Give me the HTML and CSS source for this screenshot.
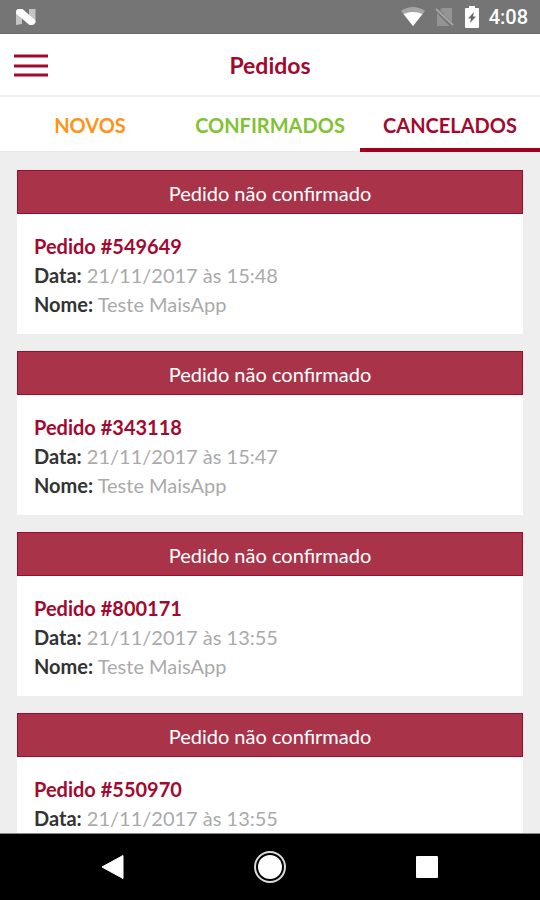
FILE: index.html
```html
<!DOCTYPE html>
<html lang="pt-BR">
<head>
<meta charset="utf-8">
<meta name="viewport" content="width=device-width, initial-scale=1">
<title>Pedidos</title>
<link rel="stylesheet" href="styles.css">
</head>
<body>
<div class="status">
  <svg class="status-logo" width="22" height="18" viewBox="0 0 22 18" aria-hidden="true">
    <path d="M1 3.500 7 6v10l-6 1zM14 1h6.500v14L14 11z" fill="#c4c4c4"/>
    <path d="M1 4Q1 1 4 1h3.500L20.500 12.500q0 4.500-4 4.500h-2L1 5.500z" fill="#fff"/>
  </svg>
  <div class="status-icons">
    <svg width="24" height="20" viewBox="0 0 24 20" aria-hidden="true">
      <path d="M0 4Q12-4 24 4L12 19z" fill="#a5a5a5"/>
      <path d="M2.500 7Q12 3 21.500 7L12 19z" fill="#fff"/>
    </svg>
    <svg width="20" height="20" viewBox="0 0 20 20" aria-hidden="true">
      <path d="M7 1h10v14.500L5 3zM2 6l12.500 13H2z" fill="#949494"/>
      <path d="M1 2l17 16" stroke="#a5a5a5" stroke-width="2"/>
    </svg>
    <svg width="14" height="22" viewBox="0 0 14 22" aria-hidden="true">
      <path d="M4 0h6v2h3q1 0 1 1v18q0 1-1 1H1q-1 0-1-1V3q0-1 1-1h3z" fill="#fff"/>
      <path d="M9 6 3 12.500h3L5 17l6-6.500H8z" fill="#666"/>
    </svg>
    <span class="clock">4:08</span>
  </div>
</div>
<header class="header">
  <button class="menu" type="button" aria-label="Menu">
    <svg width="34" height="24" viewBox="0 0 34 24" aria-hidden="true">
      <path d="M0 2h34M0 12h34M0 21h34" stroke="#a3092f" stroke-width="3"/>
    </svg>
  </button>
  <h1 class="title">Pedidos</h1>
</header>
<nav class="tabs">
  <a class="tab tab-new" href="#novos">NOVOS</a>
  <a class="tab tab-confirmed" href="#confirmados">CONFIRMADOS</a>
  <a class="tab tab-cancelled" href="#cancelados" aria-current="page">CANCELADOS</a>
</nav>
<main class="orders">
  <article class="order">
    <p class="order-state">Pedido não confirmado</p>
    <div class="order-body">
      <h2 class="order-id">Pedido #549649</h2>
      <p><b>Data:</b> 21/11/2017 às 15:48</p>
      <p><b>Nome:</b> Teste MaisApp</p>
    </div>
  </article>
  <article class="order">
    <p class="order-state">Pedido não confirmado</p>
    <div class="order-body">
      <h2 class="order-id">Pedido #343118</h2>
      <p><b>Data:</b> 21/11/2017 às 15:47</p>
      <p><b>Nome:</b> Teste MaisApp</p>
    </div>
  </article>
  <article class="order">
    <p class="order-state">Pedido não confirmado</p>
    <div class="order-body">
      <h2 class="order-id">Pedido #800171</h2>
      <p><b>Data:</b> 21/11/2017 às 13:55</p>
      <p><b>Nome:</b> Teste MaisApp</p>
    </div>
  </article>
  <article class="order">
    <p class="order-state">Pedido não confirmado</p>
    <div class="order-body">
      <h2 class="order-id">Pedido #550970</h2>
      <p><b>Data:</b> 21/11/2017 às 13:55</p>
    </div>
  </article>
</main>
<footer class="system">
  <button type="button" aria-label="Voltar">
    <svg width="34" height="34" viewBox="0 0 34 34" aria-hidden="true"><path d="M6 17 27 5.500v23z" fill="#fff" stroke="#fff" stroke-linejoin="round"/></svg>
  </button>
  <button type="button" aria-label="Início">
    <svg width="34" height="34" viewBox="0 0 34 34" aria-hidden="true"><circle cx="17" cy="17" r="15" fill="none" stroke="#ddd" stroke-width="2"/><circle cx="17" cy="17" r="12" fill="#fff"/></svg>
  </button>
  <button type="button" aria-label="Recentes">
    <svg width="34" height="34" viewBox="0 0 34 34" aria-hidden="true"><rect x="6" y="6" width="22" height="22" rx="1" fill="#fff"/></svg>
  </button>
</footer>
</body>
</html>
```
FILE: styles.css
```css
* {
  box-sizing: border-box;
}

body {
  display: flex;
  flex-direction: column;
  height: 100vh;
  margin: 0;
  overflow: hidden;
  background: #eee;
  color: #aaa;
  font: 20px/29px Lato, sans-serif;
}

h1, h2, p {
  margin: 0;
}

button {
  display: flex;
  padding: 0;
  border: 0;
  background: none;
}

.status {
  display: flex;
  flex: none;
  align-items: center;
  justify-content: space-between;
  height: 34px;
  padding: 0 12px 0 15px;
  background: #757575;
  border-bottom: 1px solid #686868;
}

.status-icons {
  display: flex;
  align-items: center;
  gap: 10px;
}

.clock {
  color: #fff;
  font: 500 20px/24px Roboto, sans-serif;
}

.header {
  display: grid;
  flex: none;
  grid-template-columns: 34px 1fr 34px;
  align-items: center;
  height: 63px;
  padding: 2px 14px 0;
  background: #fff;
  border-bottom: 2px solid #eee;
}

.title {
  color: #a3092f;
  font-size: 23px;
  line-height: 29px;
  text-align: center;
}

.tabs {
  display: grid;
  flex: none;
  grid-template-columns: repeat(3, 1fr);
  background: #fff;
}

.tab {
  height: 55px;
  border-bottom: 1px solid #e8e8e8;
  font-weight: 700;
  line-height: 56px;
  text-align: center;
  text-decoration: none;
}

.tab-new {
  color: #ff9318;
}

.tab-confirmed {
  color: #82c235;
}

.tab-cancelled {
  color: #a3092f;
  border-bottom: 4px solid #a3001f;
}

.orders {
  display: flex;
  flex: 1;
  flex-direction: column;
  gap: 17px;
  min-height: 0;
  padding: 18px 17px 0;
  overflow: hidden;
}

.order {
  flex: none;
  background: #fff;
}

.order-state {
  height: 44px;
  background: #a93449;
  border: 1px solid #a3092f;
  color: #fff;
  line-height: 44px;
  text-align: center;
}

.order-body {
  padding: 18px 17px 15px;
}

.order-id {
  color: #a3092f;
  font-size: 20px;
  line-height: 29px;
}

.order b {
  color: #333;
}

.system {
  display: grid;
  flex: none;
  grid-template-columns: repeat(3, 1fr);
  justify-items: center;
  align-items: center;
  height: 67px;
  padding: 0 34px;
  background: #000;
  border-top: 1px solid #888;
}
```
